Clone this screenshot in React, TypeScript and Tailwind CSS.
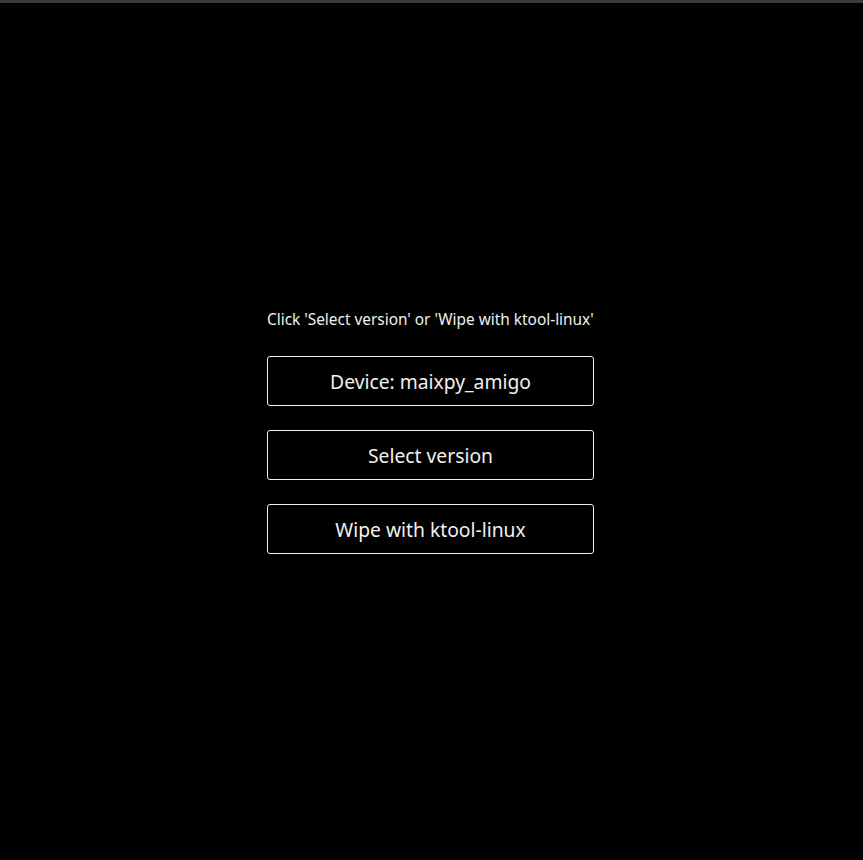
import React from "react";

export default function App() {
  const buttons = ["Device: maixpy_amigo", "Select version", "Wipe with ktool-linux"];
  return (
    <div
      className="w-full h-[860px] bg-black flex flex-col"
      style={{ fontFamily: '"Noto Sans", "Open Sans", sans-serif' }}
    >
      <div className="h-[3px] bg-[#3c3c3c] shrink-0" />
      <div className="flex-1 flex items-center justify-center pr-[2px]">
        <div className="flex flex-col w-[327px]">
          <div className="h-5 leading-5 text-[15.4px] text-[#f0f0f0] whitespace-nowrap">
            Click 'Select version' or 'Wipe with ktool-linux'
          </div>
          <div className="flex flex-col gap-6 mt-[26px] w-full">
            {buttons.map((b) => (
              <button
                key={b}
                className="w-full h-[50px] border border-[#f0f0f0] rounded-[3px] text-[19.3px] text-[#f0f0f0] bg-black flex items-center justify-center pt-[3px]"
              >
                {b}
              </button>
            ))}
          </div>
        </div>
      </div>
    </div>
  );
}
